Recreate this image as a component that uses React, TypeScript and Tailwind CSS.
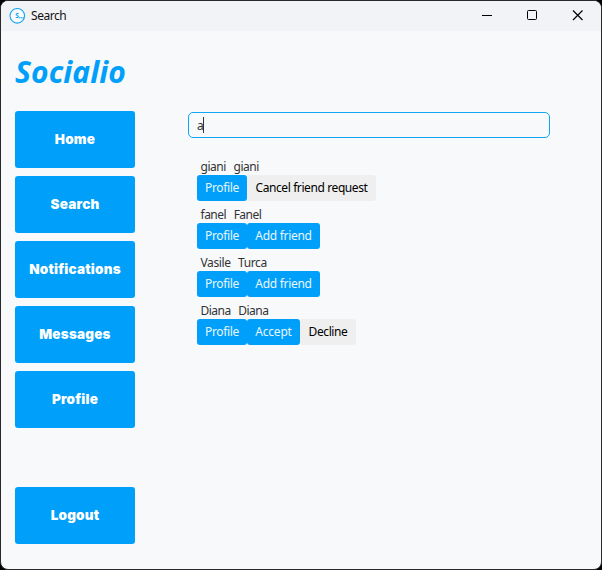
import React from "react";

type Action = { label: string; primary: boolean; size: string };
type Person = { first: string; last: string; tracking: string; actions: Action[] };

const profile: Action = { label: "Profile", primary: true, size: "w-[50px] tracking-[-0.35px]" };
const addFriend: Action = { label: "Add friend", primary: true, size: "w-[73px] tracking-[-0.3px]" };

const people: Person[] = [
  {
    first: "giani",
    last: "giani",
    tracking: "tracking-[-0.45px]",
    actions: [profile, { label: "Cancel friend request", primary: false, size: "w-[129px] tracking-[-0.4px]" }],
  },
  { first: "fanel", last: "Fanel", tracking: "tracking-[-0.5px]", actions: [profile, addFriend] },
  { first: "Vasile", last: "Turca", tracking: "tracking-[-0.4px]", actions: [profile, addFriend] },
  {
    first: "Diana",
    last: "Diana",
    tracking: "tracking-[-0.5px]",
    actions: [
      profile,
      { label: "Accept", primary: true, size: "w-[53px] tracking-[-0.2px]" },
      { label: "Decline", primary: false, size: "w-[56px] tracking-[-0.4px]" },
    ],
  },
];

const navItems = ["Home", "Search", "Notifications", "Messages", "Profile"];

function NavButton({ label, className = "" }: { label: string; className?: string }) {
  return (
    <button
      className={`h-[57px] w-[120px] shrink-0 rounded-[3px] bg-[#009ff9] font-['Inter',sans-serif] text-[13.5px] font-black tracking-[0.2px] text-white ${className}`}
    >
      {label}
    </button>
  );
}

function TitleBar() {
  return (
    <header className="flex h-[30px] shrink-0 items-center bg-[#f2f3f6] pl-2">
      <svg width="17" height="17" viewBox="0 0 17 17" className="shrink-0">
        <circle cx="8.3" cy="7.8" r="7.3" fill="#f8fafc" stroke="#1ba5ef" strokeWidth="1.1" />
        <text x="6.2" y="10" fontSize="6.5" fontWeight="700" fontFamily="Noto Sans, sans-serif" fill="#009ff9">
          S
        </text>
        <path d="M10 9.8h5" stroke="#009ff9" strokeWidth="1" strokeDasharray="1.4 .4" />
      </svg>
      <span className="ml-[5px] flex-1 text-[12px] tracking-[-0.45px] text-[#111]">Search</span>
      <svg width="120" height="30" viewBox="0 0 120 30" fill="none" stroke="#000">
        <path d="M1 14.5h10" />
        <rect x="46.5" y="9.5" width="9" height="9" rx="1" />
        <path d="M92 9.500L101.500 19M101.500 9.500L92 19" strokeWidth="1.2" />
      </svg>
    </header>
  );
}

export default function App() {
  return (
    <div className="h-[570px] w-[602px] bg-black font-['Noto_Sans',sans-serif]">
      <div className="flex h-full flex-col overflow-hidden rounded-[8px] border border-[#29292d] bg-[#f7f9fb]">
        <TitleBar />
        <div className="flex flex-1 pl-[14px]">
          <aside className="flex w-[120px] shrink-0 flex-col">
            <h1 className="h-[80px] pt-5 text-[30px] font-bold italic leading-[41px] tracking-[0.1px] text-[#009ff9]">
              Socialio
            </h1>
            <nav className="flex flex-col gap-2">
              {navItems.map((item) => (
                <NavButton key={item} label={item} />
              ))}
            </nav>
            <NavButton label="Logout" className="mt-[59px]" />
          </aside>
          <main className="ml-[53px] pt-[81px]">
            <div className="flex h-[26px] w-[362px] items-center rounded-[5px] border border-[#10a5f5] bg-[#f7f9fb] pl-2 text-[12px] text-[#333]">
              <span className="w-[6px] pt-px">a</span>
              <span className="h-[16px] w-px bg-[#333]" />
            </div>
            <ul className="ml-[9px] mt-[15px]">
              {people.map((p) => (
                <li key={p.first} className="flex h-12 flex-col">
                  <div
                    className={`flex h-[22px] items-end gap-[7.5px] pl-[3.5px] text-[12px] leading-[16px] text-[#333] ${p.tracking}`}
                  >
                    <span>{p.first}</span>
                    <span>{p.last}</span>
                  </div>
                  <div className="flex">
                    {p.actions.map((a) => (
                      <button
                        key={a.label}
                        className={`h-[26px] whitespace-nowrap rounded-[3px] text-center text-[12px] leading-[26px] ${a.size} ${
                          a.primary ? "bg-[#009ff9] text-[#e8f6ff]" : "bg-[#efefef] text-black"
                        }`}
                      >
                        {a.label}
                      </button>
                    ))}
                  </div>
                </li>
              ))}
            </ul>
          </main>
        </div>
      </div>
    </div>
  );
}
